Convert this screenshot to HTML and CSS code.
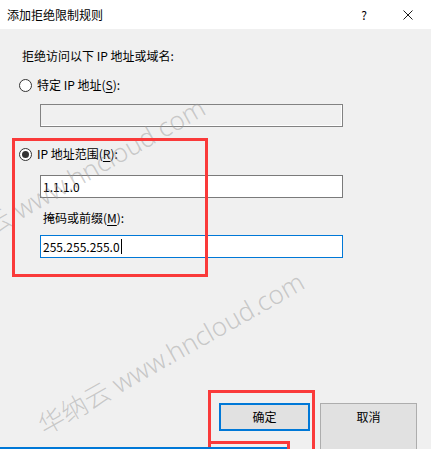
FILE: index.html
```html
<!DOCTYPE html>
<html lang="zh-CN">
<head>
<meta charset="utf-8">
<title>添加拒绝限制规则</title>
<link rel="stylesheet" href="styles.css">
</head>
<body>
<div class="window">
  <div class="titlebar">
    <span class="title">添加拒绝限制规则</span>
    <span class="help">?</span>
    <span class="close"><svg width="10" height="10" viewBox="0 0 10 10"><path d="M0.5 0.5L9.5 9.5M9.5 0.5L0.5 9.5" stroke="#1a1a1a" stroke-width="1" fill="none"/></svg></span>
  </div>
  <div class="content">
    <div class="prompt">拒绝访问以下 IP 地址或域名:</div>
    <div class="radio-row row1"><span class="radio"></span><span class="rlabel">特定 IP 地址(<u>S</u>):</span></div>
    <div class="input disabled"></div>
    <div class="radio-row row2"><span class="radio checked"></span><span class="rlabel">IP 地址范围(<u>R</u>):</span></div>
    <div class="input first">1.1.1.0</div>
    <div class="field-label">掩码或前缀(<u>M</u>):</div>
    <div class="input focused">255.255.255.0<span class="caret"></span></div>
    <div class="buttons">
      <div class="btn ok">确定</div>
      <div class="btn cancel">取消</div>
    </div>
  </div>

  <div class="watermark wm1">华纳云 www.hncloud.com</div>
  <div class="watermark wm2">华纳云 www.hncloud.com</div>

  <div class="redbox box1"></div>
  <div class="redbox box2"></div>
  <div class="red-bottom-h"></div>
  <div class="red-bottom-v"></div>
  <div class="blue-line"></div>
</div>
</body>
</html>
```

FILE: styles.css
```css
html, body {
  margin: 0;
  padding: 0;
  width: 431px;
  height: 449px;
  overflow: hidden;
  background: #f0f0f0;
}

.window {
  position: relative;
  width: 431px;
  height: 449px;
  overflow: hidden;
  font-family: "Noto Sans CJK SC", "Noto Sans", sans-serif;
  font-size: 12px;
  color: #000;
  background: #f0f0f0;
}

.titlebar {
  height: 29px;
  background: #fff;
  display: flex;
  align-items: center;
  padding-left: 7px;
}

.title {
  font-size: 12px;
  line-height: 16px;
  padding-top: 1px;
}

.help {
  margin-left: auto;
  width: 10px;
  text-align: center;
  font-size: 12px;
  line-height: 16px;
  margin-right: 34px;
}

.close {
  display: flex;
  width: 10px;
  height: 10px;
  margin-right: 18px;
  margin-top: 1px;
}

.content {
  display: flex;
  flex-direction: column;
  align-items: flex-start;
}

.prompt {
  margin-top: 19px;
  margin-left: 22px;
  line-height: 16px;
}

.radio-row {
  display: flex;
  align-items: center;
  height: 16px;
  margin-left: 19px;
}

.row1 { margin-top: 13px; }
.row2 { margin-top: 19px; }

.radio {
  box-sizing: border-box;
  width: 13px;
  height: 13px;
  border: 1px solid #333;
  border-radius: 50%;
  background: #fff;
  display: flex;
  align-items: center;
  justify-content: center;
  margin-right: 5px;
}

.radio.checked::after {
  content: "";
  width: 7px;
  height: 7px;
  border-radius: 50%;
  background: #333;
}

.rlabel { line-height: 16px; }

u { text-decoration: underline; text-underline-offset: 2px; }

.input {
  box-sizing: border-box;
  width: 303px;
  height: 23px;
  margin-left: 40px;
  border: 1px solid #7a7a7a;
  background: #fff;
  line-height: 21px;
  padding-left: 2px;
  display: flex;
  align-items: center;
}

.input.disabled {
  margin-top: 11px;
  background: #f0f0f0;
  border-color: #828282;
  box-shadow: inset -1px -1px 0 #fff;
}

.input.first { margin-top: 13px; }

.input.focused {
  margin-top: 9px;
  border-color: #0078d7;
}

.caret {
  display: inline-block;
  width: 1px;
  height: 15px;
  background: #000;
  margin-left: 1px;
}

.field-label {
  margin-top: 12px;
  margin-left: 43px;
  line-height: 16px;
}

.buttons {
  display: flex;
  gap: 10px;
  margin-top: 145px;
  margin-left: 219px;
  align-items: flex-start;
}

.btn {
  box-sizing: border-box;
  background: #e1e1e1;
  text-align: center;
  font-size: 12px;
}

.btn.ok {
  width: 91px;
  height: 28px;
  border: 2px solid #0078d7;
  line-height: 24px;
}

.btn.cancel {
  width: 97px;
  height: 50px;
  border: 1px solid #adadad;
  line-height: 26px;
}

.watermark {
  position: absolute;
  font-family: "Noto Sans", "Noto Sans CJK SC", sans-serif;
  font-weight: 300;
  font-size: 26px;
  line-height: 30px;
  color: rgba(150, 150, 150, 0.45);
  white-space: nowrap;
  transform: rotate(-29.5deg);
  transform-origin: 0 50%;
  pointer-events: none;
}

.wm2 { left: 40px; top: 412px; }
.wm1 { left: -59px; top: 238px; }

.redbox {
  position: absolute;
  box-sizing: border-box;
  border: 3px solid #fa3a3a;
}

.box1 {
  left: 12px;
  top: 138px;
  width: 196px;
  height: 139px;
}

.box2 {
  left: 208px;
  top: 390px;
  width: 107px;
  height: 80px;
  border-bottom: none;
}

.red-bottom-h {
  position: absolute;
  left: 208px;
  top: 441px;
  width: 82px;
  height: 3px;
  background: #fa3a3a;
}

.red-bottom-v {
  position: absolute;
  left: 287px;
  top: 441px;
  width: 3px;
  height: 10px;
  background: #fa3a3a;
}

.blue-line {
  position: absolute;
  left: 0;
  top: 447px;
  width: 287px;
  height: 2px;
  background: #0078d7;
}
```
